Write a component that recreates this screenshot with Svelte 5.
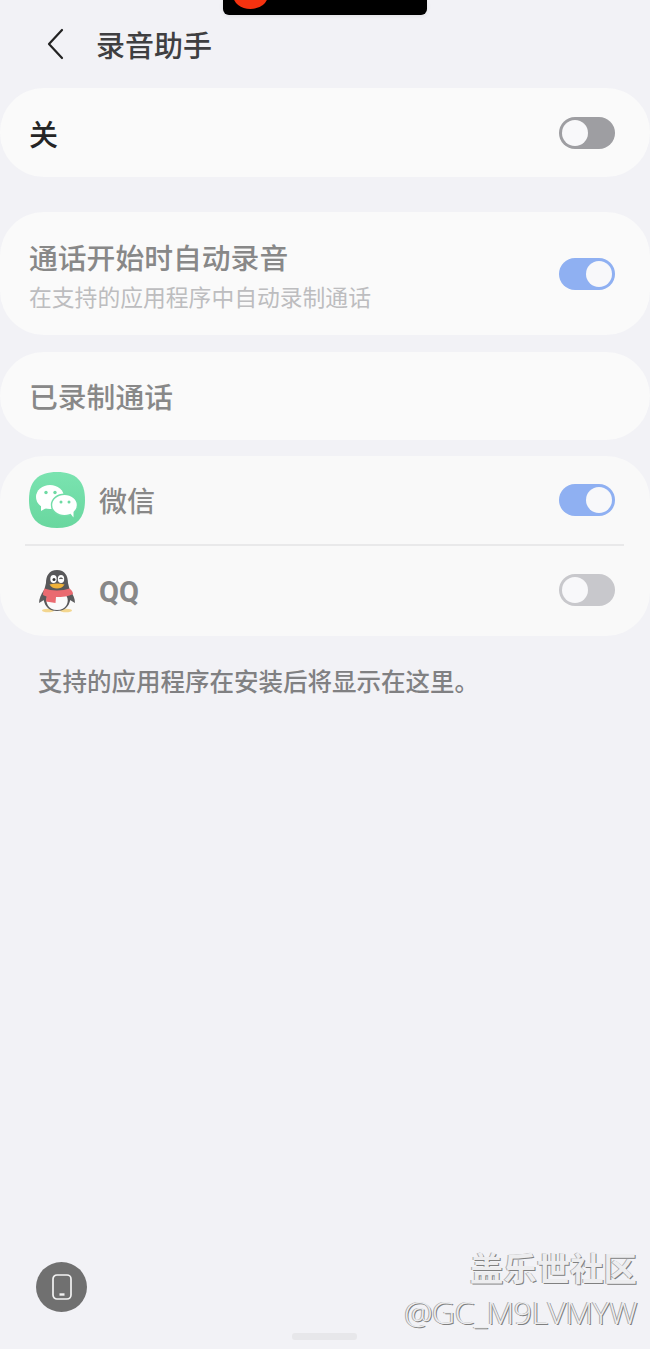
<script>
	let toggles = $state({ master: false, auto: true, wechat: true, qq: false });
</script>

<div class="page">
	<div class="notch"><span class="notch-dot"></span></div>

	<header class="header">
		<svg class="back" width="24" height="34" viewBox="0 0 24 34" fill="none" stroke="#222" stroke-width="2.2" stroke-linecap="round" stroke-linejoin="round"><path d="M19 3 L6 17 L19 31"/></svg>
		<h1>录音助手</h1>
	</header>

	<section class="card master">
		<span class="master-label">关</span>
		<button class="toggle off dark" aria-label="关" onclick={() => toggles.master = !toggles.master}><i></i></button>
	</section>

	<section class="card auto">
		<div>
			<div class="row-title">通话开始时自动录音</div>
			<div class="row-sub">在支持的应用程序中自动录制通话</div>
		</div>
		<button class="toggle on" aria-label="通话开始时自动录音"><i></i></button>
	</section>

	<section class="card recorded">
		<span class="row-title">已录制通话</span>
	</section>

	<section class="card apps">
		<div class="app wechat">
			<svg class="app-icon" width="56" height="56" viewBox="0 0 56 56">
				<defs>
					<linearGradient id="wx" x1="0" y1="0" x2="0" y2="1">
						<stop offset="0" stop-color="#7ae3b0"/>
						<stop offset="1" stop-color="#69d79f"/>
					</linearGradient>
				</defs>
				<path d="M28 0 C47 0 56 9 56 28 C56 47 47 56 28 56 C9 56 0 47 0 28 C0 9 9 0 28 0 Z" fill="url(#wx)"/>
				<ellipse cx="21" cy="25" rx="14" ry="12" fill="#fff"/>
				<path d="M12 33 L12 39 L19 35 Z" fill="#fff"/>
				<ellipse cx="35.500" cy="33" rx="13" ry="10.800" fill="#fff" stroke="#72dda8" stroke-width="1.400"/>
				<path d="M41 41 L44.500 45.500 L44.500 39 Z" fill="#fff"/>
				<circle cx="17" cy="20.500" r="1.700" fill="#6edaa3"/>
				<circle cx="26" cy="20.500" r="1.700" fill="#6edaa3"/>
				<circle cx="32" cy="30" r="1.500" fill="#6edaa3"/>
				<circle cx="40" cy="30" r="1.500" fill="#6edaa3"/>
			</svg>
			<span class="app-name">微信</span>
			<button class="toggle on" aria-label="微信"><i></i></button>
		</div>
		<div class="divider"></div>
		<div class="app qq">
			<svg class="app-icon" width="56" height="56" viewBox="0 0 56 56">
				<ellipse cx="19" cy="46.500" rx="6" ry="1.800" fill="#f3d68f"/>
				<ellipse cx="37" cy="46.500" rx="6" ry="1.800" fill="#f3d68f"/>
				<path d="M15 26 C12 30 10 35 10 39 L15 36 Z" fill="#5c5c5e"/>
				<path d="M41 26 C44 30 46 35 46 39 L41 36 Z" fill="#5c5c5e"/>
				<path d="M28 6 C20 6 17 12 17 19 L15 27 C13 36 16 47 28 47 C40 47 43 36 41 27 L39 19 C39 12 36 6 28 6 Z" fill="#58585a"/>
				<path d="M18.500 32 L37.500 32 C41 38 37 46 28 46 C19 46 15.500 38 18.500 32 Z" fill="#fafafa"/>
				<path d="M15.500 24.500 C22 27 34 27 40.500 24.500 C42.500 26 44 28 44 30 C40 32.500 33 33 27 33 L26.500 39 L17 37.500 L17.500 32.500 C16 32 15 31.500 14 31 C14 28.500 14.500 26.500 15.500 24.500 Z" fill="#ea6a70"/>
				<ellipse cx="24.500" cy="15" rx="3.200" ry="4" fill="#fff"/>
				<ellipse cx="32" cy="15" rx="3.200" ry="4" fill="#fff"/>
				<circle cx="25" cy="15.500" r="1.500" fill="#333"/>
				<path d="M30.500 15 Q32 13 33.500 15" stroke="#333" stroke-width="1.100" fill="none"/>
				<path d="M20.500 20.500 C25 19 31 19 35.500 20.500 C33.500 23.500 31 24.500 28 24.500 C25 24.500 22.500 23.500 20.500 20.500 Z" fill="#efb23a"/>
			</svg>
			<span class="app-name latin">QQ</span>
			<button class="toggle off" aria-label="QQ"><i></i></button>
		</div>
	</section>

	<p class="note">支持的应用程序在安装后将显示在这里。</p>

	<div class="float-btn">
		<svg width="22" height="28" viewBox="0 0 22 28" fill="none" stroke="#f2f2f2" stroke-width="1.700"><rect x="2" y="2" width="18" height="24" rx="4"/><path d="M8.500 21.500h5" stroke-width="2.400"/></svg>
	</div>

	<div class="watermark">
		<div class="wm-cn">盖乐世社区</div>
		<div class="wm-id">@GC_M9LVMYW</div>
	</div>

	<div class="home-bar"></div>
</div>

<style>
	:global(body) {
		margin: 0;
		background: #f2f2f6;
	}

	.page {
		position: relative;
		width: 650px;
		height: 1349px;
		overflow: hidden;
		background: #f2f2f6;
		font-family: "Noto Sans CJK SC", "Noto Sans", sans-serif;
	}

	.notch {
		position: absolute;
		left: 223px;
		top: 0;
		width: 204px;
		height: 15px;
		background: #000;
		border-radius: 0 0 6px 6px;
		overflow: hidden;
		box-shadow: 0 1px 4px rgba(0, 0, 0, 0.08);
	}

	.notch-dot {
		position: absolute;
		left: 10px;
		top: -19px;
		width: 35px;
		height: 28px;
		border-radius: 50%;
		background: #f5320f;
	}

	.header {
		display: flex;
		align-items: center;
		height: 88px;
		padding-left: 43px;
		box-sizing: border-box;
	}

	.back {
		margin-right: 29px;
	}

	h1 {
		margin: 0;
		font-size: 29px;
		font-weight: 500;
		line-height: 1;
		color: #3f3f41;
	}

	.card {
		display: flex;
		align-items: center;
		justify-content: space-between;
		box-sizing: border-box;
		background: #fafafa;
		border-radius: 44px;
		padding: 0 35px 0 29px;
	}

	.master {
		height: 89px;
		margin-bottom: 35px;
	}

	.master-label {
		font-size: 29px;
		font-weight: 500;
		color: #252525;
	}

	.auto {
		height: 123px;
		margin-bottom: 17px;
	}

	.recorded {
		height: 88px;
		margin-bottom: 16px;
	}

	.row-title {
		font-size: 28.800px;
		font-weight: 500;
		line-height: 40px;
		color: #888;
	}

	.auto .row-title {
		margin-top: 2px;
	}

	.row-sub {
		margin-top: 4px;
		font-size: 22.800px;
		line-height: 32px;
		color: #bdbdbf;
	}

	.apps {
		display: block;
		height: 180px;
		padding: 16px 0 0;
		background: #f9f9f9;
	}

	.app {
		display: flex;
		align-items: center;
		padding: 0 35px 0 29px;
	}

	.wechat {
		height: 56px;
	}

	.qq {
		height: 56px;
		margin-top: 18px;
	}

	.qq .toggle {
		margin-top: -4px;
	}

	.app-icon {
		flex: none;
		margin-right: 14px;
	}

	.app-name {
		flex: 1;
		font-size: 28px;
		font-weight: 500;
		color: #888;
	}

	.latin {
		font-family: "Roboto", "Noto Sans", sans-serif;
		font-weight: 700;
		font-size: 29px;
	}

	.divider {
		height: 2px;
		margin: 16px 26px 0 25px;
		background: #e9e9ea;
	}

	.toggle {
		display: block;
		flex: none;
		box-sizing: border-box;
		width: 56px;
		height: 32px;
		padding: 3px;
		border: none;
		border-radius: 16px;
		cursor: pointer;
	}

	.toggle i {
		display: block;
		width: 26px;
		height: 26px;
		border-radius: 50%;
		background: #f8f8fa;
	}

	.toggle.on {
		background: #8fb0f2;
	}

	.toggle.on i {
		margin-left: auto;
	}

	.toggle.off {
		background: #c8c8cc;
	}

	.toggle.off.dark {
		background: #9e9ea2;
	}

	.note {
		margin: 29px 0 0 38px;
		font-size: 24.500px;
		font-weight: 500;
		line-height: 32px;
		color: #808082;
	}

	.float-btn {
		position: absolute;
		left: 36px;
		top: 1262px;
		width: 51px;
		height: 50px;
		display: flex;
		align-items: center;
		justify-content: center;
		border-radius: 50%;
		background: #707070;
	}

	.watermark {
		position: absolute;
		right: 13px;
		top: 1244px;
		text-align: right;
		color: #ededef;
		text-shadow: 1px 1px 0 #808080, -1px 0 0 #a8a8a8;
	}

	.wm-cn {
		font-size: 33.400px;
		font-weight: 700;
		line-height: 46px;
	}

	.wm-id {
		margin-top: 1px;
		font-family: "Open Sans", "Noto Sans", sans-serif;
		font-size: 32px;
		font-weight: 300;
		line-height: 42px;
		letter-spacing: -0.5px;
	}

	.home-bar {
		position: absolute;
		left: 292px;
		top: 1333px;
		width: 65px;
		height: 7px;
		border-radius: 3px;
		background: #e7e7ea;
	}
</style>
